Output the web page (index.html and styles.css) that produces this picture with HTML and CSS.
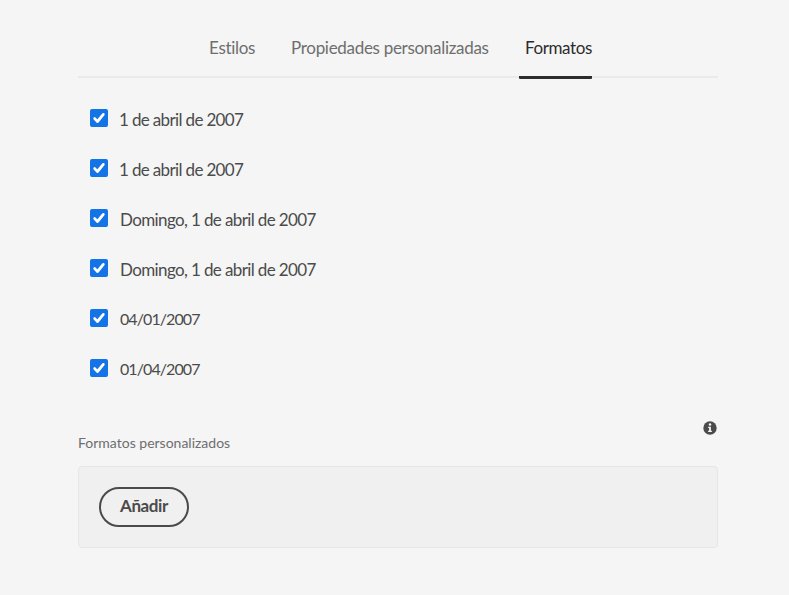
FILE: index.html
```html
<!DOCTYPE html>
<html lang="es">
<head>
<meta charset="utf-8">
<title>Formatos</title>
<link rel="stylesheet" href="styles.css">
</head>
<body>
<svg class="defs" width="0" height="0" aria-hidden="true">
<symbol id="check" viewBox="0 0 18 18"><path d="M4.7 9.6l2.8 2.9 5.8-7.1" fill="none" stroke="#fff" stroke-width="2.8" stroke-linecap="round" stroke-linejoin="round"/></symbol>
</svg>
<main class="panel">
<nav class="tabs">
<a class="tab tab-styles"><span>Estilos</span></a>
<a class="tab tab-properties"><span>Propiedades personalizadas</span></a>
<a class="tab tab-formats selected"><span>Formatos</span></a>
</nav>
<div class="options">
<label class="option"><svg class="box"><use href="#check"/></svg><span class="short">1 de abril de 2007</span></label>
<label class="option"><svg class="box"><use href="#check"/></svg><span class="short">1 de abril de 2007</span></label>
<label class="option"><svg class="box"><use href="#check"/></svg><span class="long">Domingo, 1 de abril de 2007</span></label>
<label class="option"><svg class="box"><use href="#check"/></svg><span class="long">Domingo, 1 de abril de 2007</span></label>
<label class="option"><svg class="box"><use href="#check"/></svg><span class="numeric">04/01/2007</span></label>
<label class="option"><svg class="box"><use href="#check"/></svg><span class="numeric">01/04/2007</span></label>
</div>
<div class="heading">
<span class="heading-text">Formatos personalizados</span>
<svg class="info" viewBox="0 0 14 14"><circle cx="7" cy="7" r="6.7" fill="#4b4b4b"/><circle cx="7" cy="3.6" r="1.25" fill="#f5f5f5"/><path d="M5.2 5.8h2.7v4h1v1.3H5.1V9.8h1V7.1h-.9z" fill="#f5f5f5"/></svg>
</div>
<section class="well"><button class="add"><span>Añadir</span></button></section>
</main>
</body>
</html>
```
FILE: styles.css
```css
* { box-sizing: border-box; }
body { margin: 0; background: #f5f5f5; font-family: Lato, "Open Sans", sans-serif; color: #4b4b4b; }
.defs { display: block; }
.panel { width: 640px; margin-left: 78px; padding-top: 30px; }
.tabs { display: flex; height: 48px; padding-left: 131px; border-bottom: 2px solid #eaeaea; }
.tab { height: 49px; line-height: 36px; font-size: 17px; color: #6e6e6e; white-space: nowrap; flex: none; }
.tab-styles { width: 82px; letter-spacing: -0.3px; }
.tab-properties { width: 228px; letter-spacing: -0.3px; }
.tab-formats { width: 73px; padding-left: 6px; letter-spacing: -0.4px; }
.tab.selected { color: #2c2c2c; background: linear-gradient(#2c2c2c, #2c2c2c) 0 100% / 100% 3px no-repeat; border-radius: 1px; }
.options { padding: 15px 0 0 12px; }
.option { display: flex; align-items: center; gap: 12px; height: 50px; font-size: 17px; white-space: nowrap; }
.box { width: 18px; height: 18px; background: #1473e6; border-radius: 2px; }
.option span { line-height: 20px; padding-top: 3px; }
.option .short { letter-spacing: -0.65px; margin-left: -1px; }
.long { letter-spacing: -0.62px; }
.option .numeric { padding-top: 1px; font-size: 16px; letter-spacing: -0.92px; }
.heading { display: flex; justify-content: space-between; height: 73px; padding-top: 28px; font-size: 14px; color: #6e6e6e; }
.heading-text { line-height: 20px; padding-top: 12px; }
.info { width: 14px; height: 14px; margin-right: 1px; }
.well { height: 82px; padding: 20px; background: #f0f0f0; border: 1px solid #e6e6e6; border-radius: 4px; }
.add { display: block; width: 90px; height: 40px; padding: 0 0 2px; border: 2px solid #4b4b4b; border-radius: 20px; background: transparent; color: #4b4b4b; font: 700 17px/34px Lato, "Open Sans", sans-serif; letter-spacing: -0.4px; }
```
